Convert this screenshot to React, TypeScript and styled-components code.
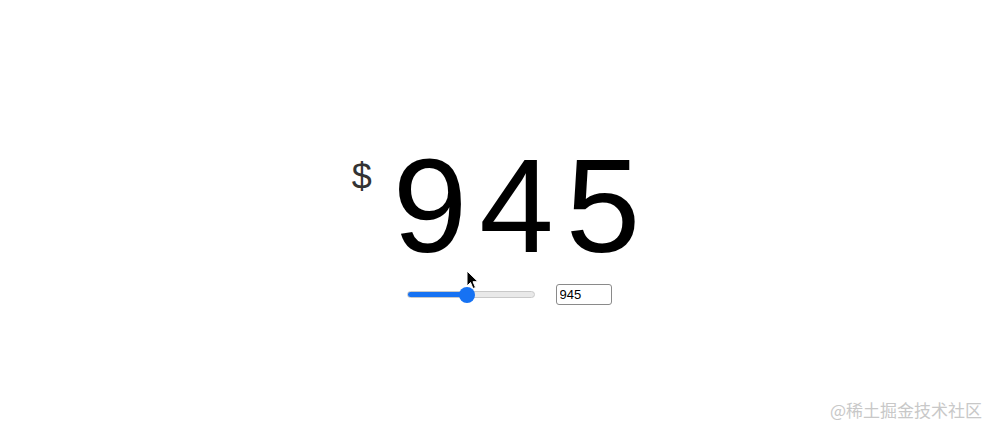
import React, { useState } from "react";
import styled, { createGlobalStyle } from "styled-components";

const Global = createGlobalStyle`
  html, body { margin: 0; padding: 0; background: #ffffff; }
  body { font-family: "Liberation Sans", Arial, Helvetica, sans-serif; }
`;

const Page = styled.div`
  position: relative;
  width: 988px;
  height: 430px;
  display: flex;
  flex-direction: column;
  align-items: center;
  overflow: hidden;
`;

const Price = styled.div`
  margin-top: 138px;
  margin-left: 4px;
  display: flex;
  flex-direction: row;
  align-items: flex-start;
  gap: 21px;
`;

const Currency = styled.span`
  margin-top: 21px;
  font-size: 36px;
  line-height: 1;
  color: #333333;
`;

const Amount = styled.span`
  font-size: 134px;
  line-height: 135px;
  height: 135px;
  color: #000000;
  letter-spacing: 12px;
  margin-right: -12px;
`;

const Controls = styled.div`
  margin-top: 11px;
  margin-left: 30px;
  display: flex;
  align-items: center;
  gap: 21px;
  height: 21px;
`;

const Range = styled.input<{ $pct: number }>`
  -webkit-appearance: none;
  appearance: none;
  width: 128px;
  height: 7px;
  margin: 0;
  border-radius: 4px;
  border: 1px solid #c9c9c9;
  box-sizing: border-box;
  background: linear-gradient(
    to right,
    #1672f3 0%,
    #1672f3 ${(p) => p.$pct}%,
    #e9e9e9 ${(p) => p.$pct}%,
    #e9e9e9 100%
  );
  outline: none;
  &::-webkit-slider-thumb {
    -webkit-appearance: none;
    appearance: none;
    width: 16px;
    height: 16px;
    border-radius: 50%;
    background: #1672f3;
    border: none;
  }
`;

const ValueBox = styled.input`
  width: 56px;
  height: 21px;
  box-sizing: border-box;
  border: 1px solid #8a8a8a;
  border-radius: 3px;
  padding: 0 3px;
  font-family: "Liberation Sans", Arial, sans-serif;
  font-size: 13px;
  color: #000;
  background: #fff;
  outline: none;
`;

const Cursor = styled.svg`
  position: absolute;
  left: 466px;
  top: 270px;
  width: 13px;
  height: 20px;
  pointer-events: none;
`;

const Watermark = styled.div`
  position: absolute;
  right: 6px;
  bottom: 8px;
  font-family: "Noto Sans CJK SC", "Liberation Sans", sans-serif;
  font-size: 17px;
  color: #c8c8c8;
`;

export default function App() {
  const [value, setValue] = useState(945);
  const max = 2000;
  const pct = (value / max) * 100;
  return (
    <Page>
      <Global />
      <Price>
        <Currency>$</Currency>
        <Amount>{value}</Amount>
      </Price>
      <Controls>
        <Range
          type="range"
          min={0}
          max={max}
          value={value}
          $pct={pct}
          onChange={(e) => setValue(Number(e.target.value))}
        />
        <ValueBox
          type="text"
          value={value}
          onChange={(e) => setValue(Number(e.target.value) || 0)}
        />
      </Controls>
      <Cursor viewBox="0 0 13 20">
        <path
          d="M1 1 L1 16 L4.5 12.5 L7 18.5 L9.5 17.5 L7 11.7 L12 11.7 Z"
          fill="#000"
          stroke="#fff"
          strokeWidth="1"
          strokeLinejoin="round"
        />
      </Cursor>
      <Watermark>@稀土掘金技术社区</Watermark>
    </Page>
  );
}
